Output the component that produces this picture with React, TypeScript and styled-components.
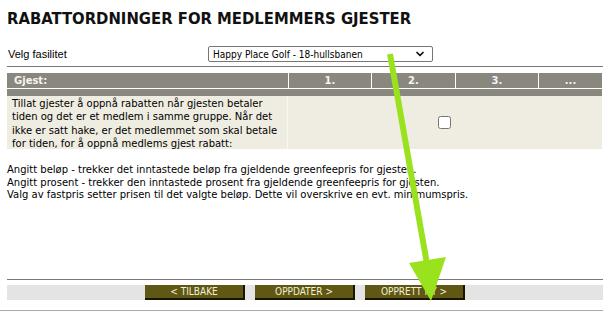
import styled, { createGlobalStyle } from "styled-components";
import { ChevronDown } from "lucide-react";

const GlobalStyle = createGlobalStyle`
  html, body {
    margin: 0;
    padding: 0;
    background: #ffffff;
  }
  body {
    font-family: "DejaVu Sans", Verdana, sans-serif;
    font-size: 10px;
    color: #000000;
  }
`;

const Page = styled.div`
  position: relative;
  width: 609px;
  height: 318px;
  overflow: hidden;
`;

const Content = styled.div`
  width: 596px;
  margin-left: 7px;
  display: flex;
  flex-direction: column;
`;

const Title = styled.h1`
  margin: 9px 0 0 0;
  height: 20px;
  line-height: 20px;
  font-size: 16.5px;
  font-weight: bold;
  color: #111111;
  font-family: "DejaVu Sans Condensed", "DejaVu Sans", sans-serif;
`;

const FacilityRow = styled.div`
  margin-top: 17px;
  height: 16px;
  display: flex;
  align-items: center;
`;

const Label = styled.span`
  width: 200px;
  padding-left: 1px;
  font-family: "Liberation Sans", Arial, sans-serif;
  font-size: 11px;
`;

const SelectBox = styled.div`
  width: 225px;
  height: 16px;
  box-sizing: border-box;
  border: 1px solid #767676;
  border-radius: 2px;
  background: #ffffff;
  display: flex;
  align-items: center;
  justify-content: space-between;
  padding: 0 6px 0 4px;
  font-family: "DejaVu Sans Condensed", "DejaVu Sans", sans-serif;
  font-size: 10px;
`;

const Rule = styled.div<{ $color?: string; $full?: boolean }>`
  height: 1px;
  background: ${(p) => p.$color ?? "#777777"};
  margin-left: ${(p) => (p.$full ? "-7px" : "0")};
  width: ${(p) => (p.$full ? "603px" : "596px")};
`;

const Table = styled.div`
  margin-top: 6px;
  width: 595px;
  display: grid;
  grid-template-columns: 281px 83px 84px 83px 64px;
`;

const HeadCell = styled.div<{ $center?: boolean }>`
  height: 15px;
  line-height: 15px;
  background: #8a877f;
  color: #f4f4f0;
  font-weight: bold;
  font-size: 10px;
  text-align: ${(p) => (p.$center ? "center" : "left")};
  padding-left: ${(p) => (p.$center ? "0" : "7px")};
  border-left: ${(p) => (p.$center ? "1px solid #ffffff" : "none")};
  border-bottom: 1px solid #ffffff;
`;

const Band = styled.div`
  grid-column: 1 / -1;
  height: 7px;
  background: #8a877f;
`;

const BodyText = styled.div`
  background: #efede2;
  border-right: 1px solid #f8f8f2;
  padding: 1px 5px 0 5px;
  height: 52px;
  line-height: 13.3px;
  font-size: 10px;
`;

const BodyCheck = styled.div`
  grid-column: 2 / -1;
  background: #efede2;
  display: flex;
  align-items: center;
  justify-content: center;
`;

const Check = styled.input`
  width: 13px;
  height: 13px;
  margin: 0 0 0 -1px;
`;

const Notes = styled.div`
  margin-top: 15px;
  line-height: 12.6px;
  font-size: 10px;
`;

const Footer = styled.div`
  margin-top: 77px;
  display: flex;
  flex-direction: column;
`;

const ButtonBar = styled.div`
  margin-top: 5px;
  height: 15px;
  background: #e4e4e4;
  display: flex;
  justify-content: center;
  gap: 10px;
  margin-bottom: 10px;
`;

const Button = styled.button`
  width: 100px;
  height: 15px;
  box-sizing: border-box;
  margin: 0;
  padding: 0;
  background: #5f5713;
  color: #f4f1d8;
  border: none;
  border-right: 2px solid #151500;
  border-bottom: 2px solid #151500;
  font-family: "DejaVu Sans Condensed", "DejaVu Sans", sans-serif;
  font-size: 10px;
  line-height: 13px;
  text-transform: uppercase;
  cursor: pointer;
`;

const Overlay = styled.svg`
  position: absolute;
  left: 0;
  top: 0;
  pointer-events: none;
`;

const columns = ["1.", "2.", "3.", "..."];

export default function App() {
  return (
    <>
      <GlobalStyle />
      <Page>
        <Content>
          <Title>RABATTORDNINGER FOR MEDLEMMERS GJESTER</Title>

          <FacilityRow>
            <Label>Velg fasilitet</Label>
            <SelectBox>
              <span>Happy Place Golf - 18-hullsbanen</span>
              <ChevronDown size={12} strokeWidth={3.5} color="#111" />
            </SelectBox>
          </FacilityRow>

          <Rule style={{ marginTop: 4 }} />

          <Table>
            <HeadCell>Gjest:</HeadCell>
            {columns.map((c) => (
              <HeadCell key={c} $center>
                {c}
              </HeadCell>
            ))}
            <Band />
            <BodyText>
              Tillat gjester å oppnå rabatten når gjesten betaler tiden og det er et
              medlem i samme gruppe. Når det ikke er satt hake, er det medlemmet som
              skal betale for tiden, for å oppnå medlems gjest rabatt:
            </BodyText>
            <BodyCheck>
              <Check type="checkbox" />
            </BodyCheck>
          </Table>

          <Notes>
            Angitt beløp - trekker det inntastede beløp fra gjeldende greenfeepris for gjesten.
            <br />
            Angitt prosent - trekker den inntastede prosent fra gjeldende greenfeepris for gjesten.
            <br />
            Valg av fastpris setter prisen til det valgte beløp. Dette vil overskrive en evt. minimumspris.
          </Notes>

          <Footer>
            <Rule />
            <ButtonBar>
              <Button>&lt; Tilbake</Button>
              <Button>Oppdater &gt;</Button>
              <Button>Opprett ny &gt;</Button>
            </ButtonBar>
            <Rule $color="#aaaaaa" $full />
          </Footer>
        </Content>

        <Overlay width="609" height="318" viewBox="0 0 609 318">
          <line x1="390" y1="54" x2="427" y2="264" stroke="#9be21e" strokeWidth="6" />
          <polygon points="409,263 446,257 431,301" fill="#9be21e" />
        </Overlay>
      </Page>
    </>
  );
}
